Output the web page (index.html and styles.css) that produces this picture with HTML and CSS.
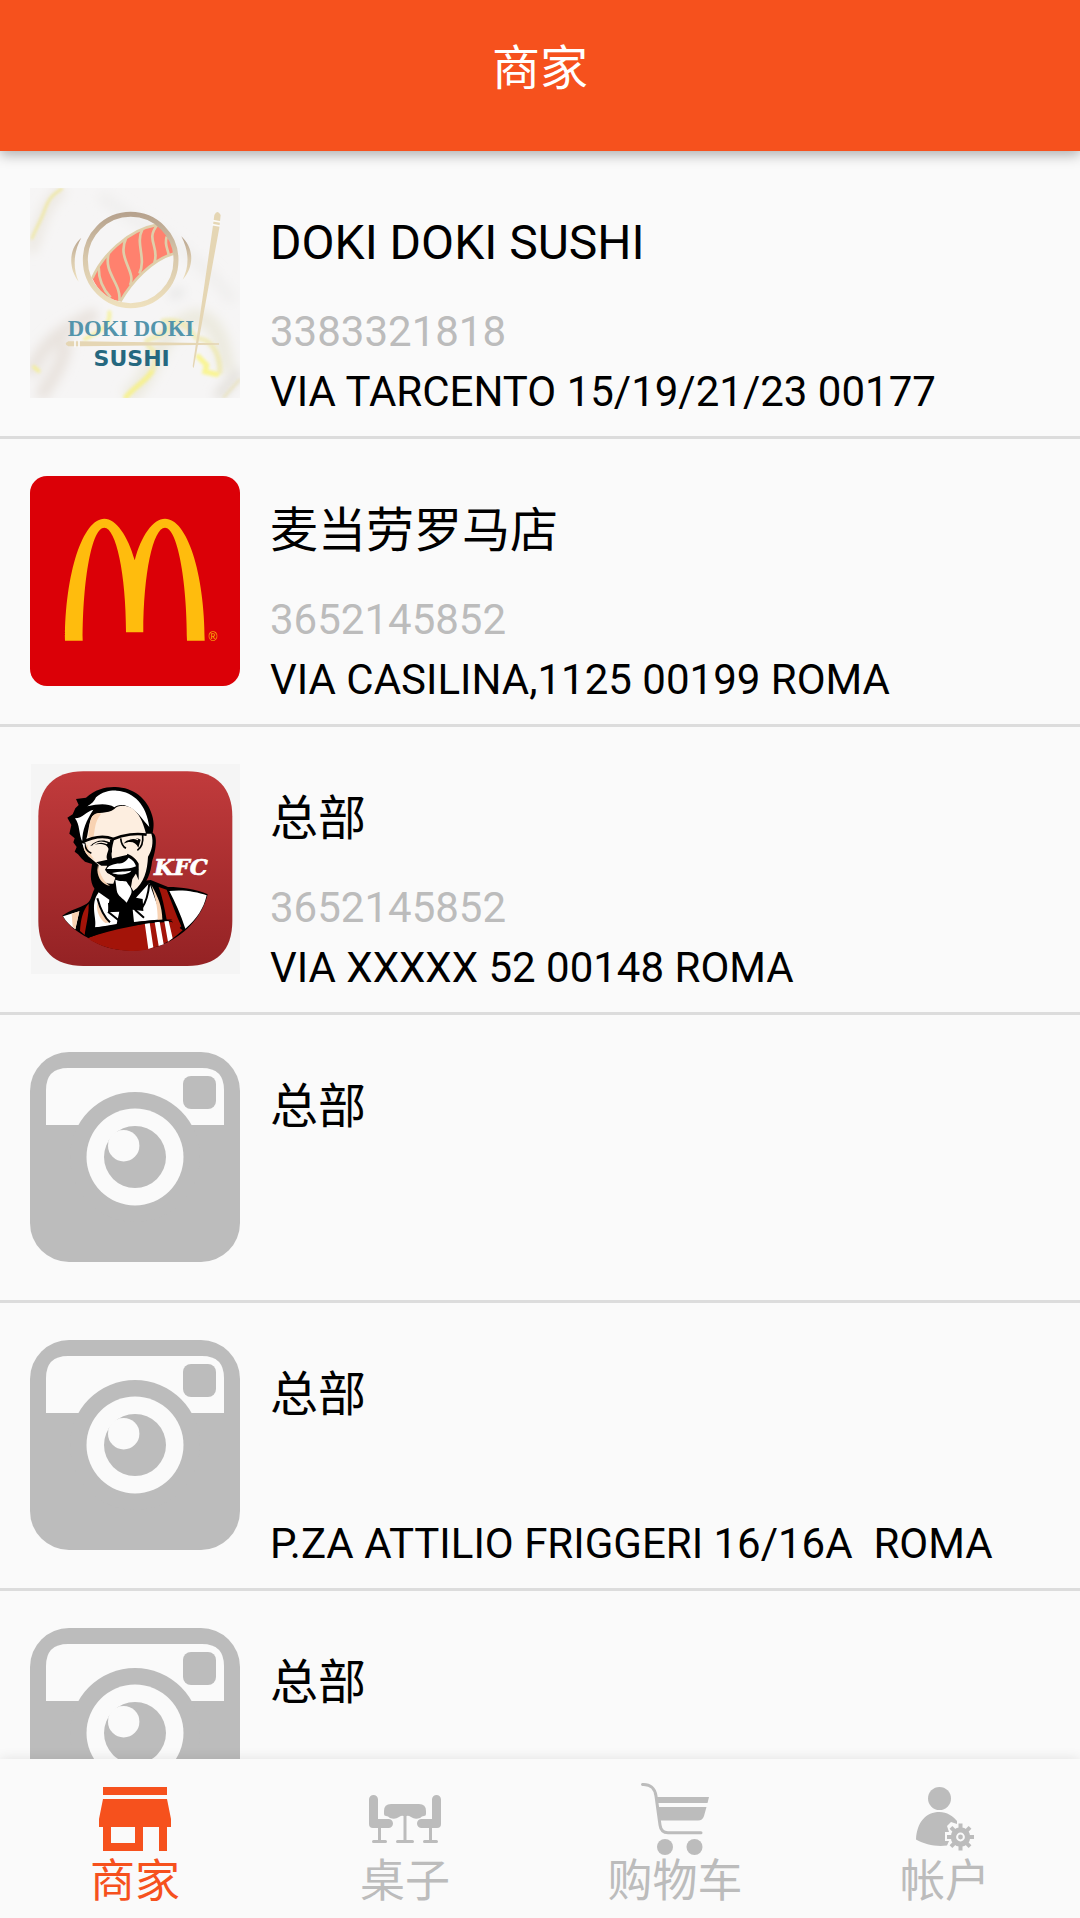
FILE: index.html
```html
<!DOCTYPE html>
<html lang="zh-CN">
<head>
    <meta charset="UTF-8">
    <meta name="viewport" content="width=device-width, initial-scale=1">
    <title>商家</title>
    <link rel="stylesheet" href="styles.css">
</head>
<body>
    <!-- Shared placeholder for shops without a logo -->
    <svg class="sprite" aria-hidden="true">
        <symbol id="camera" viewBox="0 0 210 210">
            <rect width="210" height="210" rx="39" fill="#bcbcbc"/>
            <path d="M16 73V38Q16 16 38 16H172Q194 16 194 38V73Z" fill="#fafafa"/>
            <circle cx="105" cy="105" r="65" fill="#bcbcbc"/>
            <rect x="153" y="24" width="33" height="33" rx="8" fill="#bcbcbc"/>
            <circle cx="105" cy="105" r="48.5" fill="#fafafa"/>
            <circle cx="105" cy="105" r="31" fill="#bcbcbc"/>
            <circle cx="93.7" cy="93.7" r="15.7" fill="#fafafa"/>
            <path d="M78 90L90 78L94 86L86 94Z" fill="#fafafa"/>
        </symbol>
    </svg>

    <header class="app-bar">
        <h1>商家</h1>
    </header>

    <main class="shop-list">
        <a class="shop" href="#shop-1">
            <svg class="shop-logo" viewBox="30 39 630 630" aria-hidden="true">
                <defs>
                    <linearGradient id="gold" x1="0" y1="0" x2="0" y2="1">
                        <stop offset="0" stop-color="#b7a38e"/>
                        <stop offset="0.5" stop-color="#d9c9ac"/>
                        <stop offset="1" stop-color="#eee0bd"/>
                    </linearGradient>
                    <filter id="soft" x="-20%" y="-20%" width="140%" height="140%"><feGaussianBlur stdDeviation="16"/></filter>
                    <filter id="vein" x="-20%" y="-20%" width="140%" height="140%"><feGaussianBlur stdDeviation="4"/></filter>
                </defs>
                <rect x="30" y="39" width="630" height="630" fill="#f6f5f5"/>
                <!-- marble -->
                <g filter="url(#soft)" fill="none">
                    <path d="M30 230C60 170 60 100 130 40" stroke="#ece8e2" stroke-width="34"/>
                    <path d="M30 600C70 500 120 470 230 415M60 669C100 600 120 590 140 500" stroke="#e8e2dd" stroke-width="40"/>
                    <path d="M320 669C410 600 390 520 480 450S610 490 620 590" stroke="#eceadf" stroke-width="50"/>
                    <path d="M240 60C340 150 500 190 640 380" stroke="#f0efee" stroke-width="36"/>
                    <path d="M450 360L490 350" stroke="#e4e4e3" stroke-width="24"/>
                    <path d="M590 669L660 590" stroke="#e2dfd9" stroke-width="30"/>
                </g>
                <g filter="url(#vein)" fill="none" stroke-linecap="round" opacity="0.75">
                    <path d="M125 42C92 62 82 80 74 105S48 160 36 190" stroke="#efe68c" stroke-width="8"/>
                    <path d="M42 576L56 588M268 412C274 455 230 475 195 492" stroke="#f5f08c" stroke-width="12"/>
                    <path d="M318 666C350 630 390 610 400 580" stroke="#f8f27c" stroke-width="16"/>
                    <path d="M400 580C425 525 375 515 380 500S420 495 455 450" stroke="#f1ecaa" stroke-width="16"/>
                    <path d="M430 438C480 430 500 450 530 490C570 490 600 530 600 590" stroke="#efe9ae" stroke-width="16"/>
                    <path d="M535 545L560 570L555 590L590 598" stroke="#faf475" stroke-width="16"/>
                    <path d="M612 666L658 615" stroke="#e9e2bb" stroke-width="9"/>
                </g>
                <!-- salmon slice -->
                <path d="M217 310C245 245 320 165 413 149C442 165 463 200 460 236C395 255 335 320 301 379C265 375 235 350 217 310Z" fill="#ff816e"/>
                <g fill="none" stroke="#dfcfaa" stroke-width="8">
                    <path d="M217 310C245 245 320 165 413 149M301 379C335 320 395 255 460 236"/>
                    <path d="M236 277C236 320 250 345 272 367"/>
                    <path d="M266 235C250 295 305 325 298 378"/>
                    <path d="M318 190C290 250 350 290 330 330"/>
                    <path d="M367 163C345 205 380 250 358 296"/>
                    <path d="M412 150C375 195 420 215 403 264"/>
                    <path d="M440 185C432 210 445 225 446 240"/>
                </g>
                <ellipse cx="332" cy="255" rx="136" ry="137" fill="none" stroke="url(#gold)" stroke-width="15"/>
                <path d="M184 188C145 222 145 280 176 320C158 280 160 230 184 188ZM484 184C523 220 523 275 488 314C508 275 508 230 484 184Z" fill="url(#gold)"/>
                <!-- chopsticks -->
                <path d="M583 120Q592 102 602 120L598 158L521 580L518 574L578 158Z" fill="#e5d6b4"/>
                <path d="M579 137L601 141M577 149L600 153" stroke="#fbfaf8" stroke-width="5"/>
                <path d="M145 499H180L597 505V509L180 514H145Q129 506 145 499Z" fill="#e5d6b4"/>
                <path d="M165 496V517M177 496V517" stroke="#fbfaf8" stroke-width="5"/>
                <text class="doki-text" x="143" y="484">DOKI DOKI</text>
                <text class="sushi-text" x="335" y="573">SUSHI</text>
            </svg>
            <div class="shop-info">
                <h2>DOKI DOKI SUSHI</h2>
                <p class="phone">3383321818</p>
                <p class="address">VIA TARCENTO 15/19/21/23 00177</p>
            </div>
        </a>

        <a class="shop" href="#shop-2">
            <svg class="shop-logo" viewBox="0 0 210 210" aria-hidden="true">
                <rect width="210" height="210" rx="17" fill="#db0007"/>
                <path d="M35 164.7C35 97 53 42.7 74.3 42.7C86 42.7 98 60 104.7 84.3C111 60 123 42.7 135 42.7C157 42.7 174.7 97 174.7 164.7H157C157 102 147 51.7 135 51.7C123 51.7 113.3 98 113.3 156.3H96C96 98 86 51.7 74.3 51.7C62 51.7 52.7 102 52.7 164.7Z" fill="#ffbc0d"/>
                <text class="reg-mark" x="183" y="165">®</text>
            </svg>
            <div class="shop-info">
                <h2>麦当劳罗马店</h2>
                <p class="phone">3652145852</p>
                <p class="address">VIA CASILINA,1125 00199 ROMA</p>
            </div>
        </a>

        <a class="shop" href="#shop-3">
            <svg class="shop-logo" viewBox="30 27 630 630" aria-hidden="true">
                <defs>
                    <linearGradient id="red" x1="0" y1="0" x2="0" y2="1">
                        <stop offset="0" stop-color="#c13b3c"/>
                        <stop offset="1" stop-color="#942224"/>
                    </linearGradient>
                </defs>
                <rect x="33" y="27" width="627" height="630" fill="#f5f5f5"/>
                <path d="M190 49H502C590 49 637 100 637 184V498C637 586 590 633 502 633H190C102 633 55 586 55 498V184C55 100 102 49 190 49Z" fill="url(#red)"/>
                <!-- shoulders, shirt and apron -->
                <path d="M127 482C150 464 178 460 200 446C216 436 214 412 228 395L392 375L444 396C485 396 530 402 563 418C546 487 492 545 420 572C350 595 262 592 205 549C170 530 145 511 127 482Z"/>
                <path d="M129 484L178 469L166 523C150 512 138 500 129 484ZM448 408C490 403 530 410 560 421C552 458 530 494 496 521C482 478 466 442 448 408Z" fill="#fff"/>
                <path d="M155 476L178 469L166 523L158 515Z" fill="#f8d2b2"/>
                <path d="M236 412L268 434L264 472L298 470L290 507L225 518C232 490 208 450 236 412ZM388 384L427 493L342 501L338 464L370 468L368 432L348 428Z" fill="#fff"/>
                <path d="M233 440C240 470 255 490 270 502L256 504C238 490 226 465 233 440ZM394 390C414 425 427 455 427 494L413 496C414 455 405 425 394 390Z" fill="#f8d2b2"/>
                <path d="M232 430C243 470 256 490 270 502M388 385C385 420 376 445 364 462M264 470L296 496M345 464L372 488" fill="none" stroke="#000" stroke-width="6"/>
                <path d="M203 550C250 528 330 505 455 500L488 526C440 572 385 590 330 588C280 587 235 572 203 550ZM206 446C207 480 198 510 194 540L180 528C182 495 188 465 206 446ZM416 396L440 404C455 440 468 480 484 514L474 524L455 497L440 494C434 460 427 425 416 396Z" fill="#a31409"/>
                <path d="M374 503H389L400 577L385 582ZM404 501L419 500L431 568L416 573ZM433 499L446 498L458 550L444 560Z" fill="#fff"/>
                <path d="M202 549C215 536 226 526 225 517C300 512 380 492 458 494C380 505 280 520 202 549Z"/>
                <!-- head -->
                <path d="M198 128C225 103 258 95 286 96C340 97 383 132 396 180C404 205 400 222 398 234C415 240 407 292 396 320C393 350 382 385 352 410L330 440L296 436C270 430 250 420 224 402C207 378 213 350 216 327L195 320L184 310L174 298L164 290L170 276L160 262L164 250L148 236L154 210L142 188L158 178L166 160L176 150L168 132Z"/>
                <path d="M202 154C215 146 224 138 228 127C248 110 270 106 290 107C342 110 380 150 388 216L374 200C355 175 340 158 312 150C295 149 288 152 283 157C262 144 235 147 202 154ZM165 190C188 190 200 168 220 164C200 195 186 225 187 260C176 238 180 208 165 190Z" fill="#fff"/>
                <path d="M283 162C295 148 325 150 343 165C362 183 372 212 378 236H394C402 262 395 288 384 305C382 345 373 385 340 408L333 396L337 372L355 345L350 318L320 300L278 310L262 322L262 352L286 368L280 386C250 390 230 365 236 330L207 305C192 290 188 275 192 264C206 255 203 205 217 184C232 168 262 178 283 162Z" fill="#fdeee0"/>
                <path d="M217 184C228 172 238 172 243 177C222 203 226 225 220 247H205C208 220 208 200 217 184ZM234 330C240 360 252 382 270 392C248 390 233 370 232 345ZM192 268L203 270C205 285 210 298 224 315L207 305C192 290 188 275 192 268Z" fill="#f8d2b2"/>
                <!-- glasses and eyes -->
                <path d="M183 264C215 247 250 240 280 252C310 238 350 234 380 239" fill="none" stroke="#000" stroke-width="8"/>
                <path d="M194 264C195 280 202 290 214 295M368 240C370 260 364 278 352 286M302 250C304 268 310 276 318 280" fill="none" stroke="#000" stroke-width="5"/>
                <path d="M186 265L194 266V282Z" fill="#fff"/>
                <path d="M210 274C225 256 250 252 268 262L276 256V292L266 296C270 282 262 270 248 268C234 266 224 268 210 274ZM310 266C325 248 348 244 362 254L355 278C348 260 330 256 310 266Z"/>
                <path d="M220 270C235 258 250 260 262 266M322 255C334 248 345 249 354 254" stroke="#fdeee0" stroke-width="4" fill="none"/>
                <!-- nose, moustache, mouth -->
                <path d="M270 254H282C276 275 272 298 277 312C292 320 320 312 322 296C340 303 350 315 356 326V376L346 352C338 366 334 376 332 382L318 372L286 366L262 354L255 344L262 332L244 332L228 322L262 314C254 300 272 282 270 254Z"/>
                <path d="M260 342C268 328 290 326 304 325C318 320 322 312 326 308C338 314 346 324 348 334C328 344 284 342 260 342Z" fill="#fff"/>
                <path d="M276 354C298 348 318 350 334 347C326 359 294 362 276 354Z" fill="#fff"/>
                <path d="M286 374C300 380 310 376 320 380C326 392 340 402 333 418L320 443C310 430 292 424 290 405Z" fill="#fff"/>
                <path d="M264 444L290 440L316 448L340 432L366 434L368 460L336 460L334 506L318 503L312 470L294 508L300 466L266 470Z"/>
                <text class="kfc-text" x="402" y="360">KFC</text>
            </svg>
            <div class="shop-info">
                <h2>总部</h2>
                <p class="phone">3652145852</p>
                <p class="address">VIA XXXXX 52 00148 ROMA</p>
            </div>
        </a>

        <a class="shop" href="#shop-4">
            <svg class="shop-logo" aria-hidden="true"><use href="#camera"/></svg>
            <div class="shop-info">
                <h2>总部</h2>
                <p class="phone"></p>
                <p class="address"></p>
            </div>
        </a>

        <a class="shop" href="#shop-5">
            <svg class="shop-logo" aria-hidden="true"><use href="#camera"/></svg>
            <div class="shop-info">
                <h2>总部</h2>
                <p class="phone"></p>
                <p class="address">P.ZA ATTILIO FRIGGERI 16/16A  ROMA</p>
            </div>
        </a>

        <a class="shop" href="#shop-6">
            <svg class="shop-logo" aria-hidden="true"><use href="#camera"/></svg>
            <div class="shop-info">
                <h2>总部</h2>
                <p class="phone"></p>
                <p class="address"></p>
            </div>
        </a>
    </main>

    <nav class="tab-bar">
        <a class="tab active" href="#shops" aria-current="page">
            <svg class="tab-icon" viewBox="0 0 80 80" aria-hidden="true">
                <path fill-rule="evenodd" d="M8 12H72V20H8ZM8 24H72L76 44V52H72V76H64V52H48V76H8V52H4V44ZM16 52V68H40V52Z"/>
            </svg>
            <span>商家</span>
        </a>
        <a class="tab" href="#tables">
            <svg class="tab-icon" viewBox="0 0 80 80" aria-hidden="true">
                <g id="chair">
                    <path d="M4 24.5A4.5 4.5 0 0 1 13 24.5V44H23.5A4.5 4.5 0 0 1 23.5 53H8Q4 53 4 49Z"/>
                    <path d="M13 53H16V65H20.5A1.5 1.5 0 0 1 20.5 68H8.5A1.5 1.5 0 0 1 8.5 65H13Z"/>
                </g>
                <use href="#chair" transform="matrix(-1 0 0 1 80 0)"/>
                <path d="M26 29H54Q61 29 61 36V39Q61 41 59 41Q57 41 55 43Q50 45 46 42Q43 40 41.5 41V65H47.5A1.5 1.5 0 0 1 47.5 68H32.5A1.5 1.5 0 0 1 32.5 65H38.5V41Q37 40 34 42Q30 45 25 43Q23 41 21 41Q19 41 19 39V36Q19 29 26 29Z"/>
            </svg>
            <span>桌子</span>
        </a>
        <a class="tab" href="#cart">
            <svg class="tab-icon" viewBox="0 0 80 80" aria-hidden="true">
                <path d="M7.5 9.5C15 9 20 13 21 21L25 50Q26 57.7 33 57.7H66" fill="none" stroke="currentColor" stroke-width="3" stroke-linecap="round"/>
                <path d="M21 22H74L72.5 28H22ZM22.5 32H71.5L69 41Q67.5 45.5 63 45.5H24Z"/>
                <circle cx="30" cy="72" r="8"/>
                <circle cx="59.5" cy="72" r="8"/>
            </svg>
            <span>购物车</span>
        </a>
        <a class="tab" href="#account">
            <svg class="tab-icon" viewBox="0 0 80 80" aria-hidden="true">
                <circle cx="34.5" cy="23.5" r="11.5"/>
                <path d="M11 64.5C12 47 21 37 34.5 37C42 37 48 41 52 46V49L46 47L42 51L44 57H40V66H44L42 70.5C31 72 20 69.5 11 64.5Z"/>
                <g transform="translate(55.5 62)">
                    <circle r="9.8"/>
                    <g id="teeth">
                        <rect x="-2" y="-13.5" width="4" height="27"/>
                        <rect x="-13.5" y="-2" width="27" height="4"/>
                    </g>
                    <use href="#teeth" transform="rotate(45)"/>
                    <circle r="3.4" fill="none" stroke="#fafafa" stroke-width="2"/>
                </g>
            </svg>
            <span>帐户</span>
        </a>
    </nav>
</body>
</html>
```
FILE: styles.css
```css
:root {
    --accent: #f6511d;
    --bg: #fafafa;
    --muted: #bcbcbc;
    --line: #dcdcdc;
}

* {
    box-sizing: border-box;
}

body {
    display: flex;
    flex-direction: column;
    height: 100vh;
    margin: 0;
    background: var(--bg);
    color: #000;
    font-family: Roboto, "Noto Sans CJK SC", sans-serif;
}

h1, h2, p {
    margin: 0;
    font-weight: 400;
}

.sprite {
    display: none;
}

.app-bar {
    flex-shrink: 0;
    padding: 39px 16px 52px;
    background: var(--accent);
    color: #fff;
    text-align: center;
    box-shadow: 0 4px 12px rgba(0,0,0,0.3);
    z-index: 1;
}

.app-bar h1 {
    font-size: 48px;
    line-height: 60px;
}

/* Shop list */
.shop-list {
    flex: 1;
    min-height: 0;
    overflow-y: auto;
    scrollbar-width: none;
}

.shop {
    display: flex;
    align-items: flex-start;
    gap: 30px;
    padding: 37px 30px 14px;
    border-bottom: 3px solid var(--line);
    color: inherit;
    text-decoration: none;
}

.shop-logo {
    width: 210px;
    height: 210px;
    flex-shrink: 0;
}

.shop-info {
    flex: 1;
    min-width: 0;
    padding-top: 25px;
}

.shop-info h2 {
    margin-bottom: 29px;
    font-size: 48px;
    line-height: 60px;
}

.shop-info p {
    min-height: 60px;
    font-size: 42px;
    line-height: 60px;
    white-space: pre-wrap;
}

.shop-info .phone {
    color: var(--muted);
}

/* Logo lettering */
.doki-text {
    fill: #5394ab;
    font: bold 68px "Liberation Serif", serif;
}

.sushi-text {
    fill: #26687f;
    font: bold 66px "DejaVu Sans", sans-serif;
    text-anchor: middle;
}

.reg-mark {
    fill: #ffbc0d;
    font: 12px "Liberation Sans", sans-serif;
    text-anchor: middle;
}

.kfc-text {
    fill: #fff;
    stroke: #fff;
    stroke-width: 2px;
    font: italic bold 68px "DejaVu Serif", serif;
}

/* Bottom tabs */
.tab-bar {
    display: grid;
    grid-template-columns: repeat(4, 1fr);
    flex-shrink: 0;
    background: var(--bg);
    box-shadow: 0 0 12px rgba(0,0,0,0.1);
    z-index: 1;
}

.tab {
    display: flex;
    flex-direction: column;
    align-items: center;
    padding: 16px 0 9px;
    color: var(--muted);
    font-size: 45px;
    line-height: 54px;
    text-decoration: none;
}

.tab.active {
    color: var(--accent);
}

.tab-icon {
    width: 80px;
    height: 80px;
    fill: currentColor;
}
```
